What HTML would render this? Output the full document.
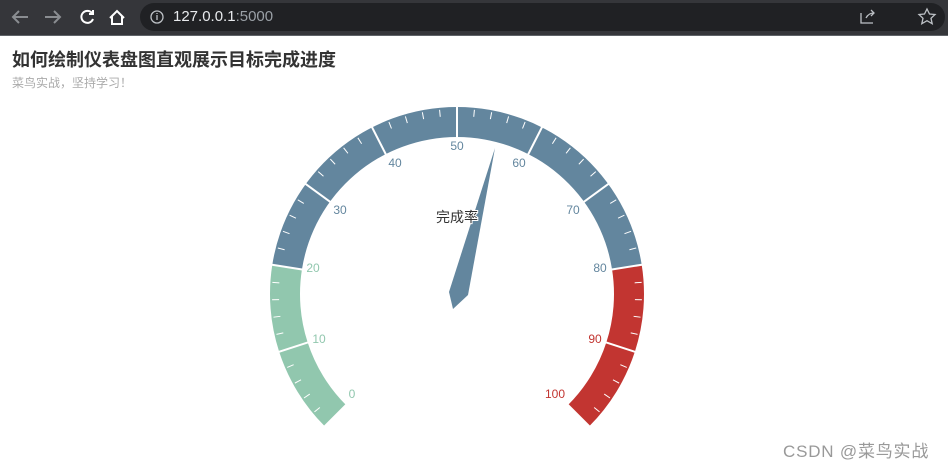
<!DOCTYPE html>
<html><head><meta charset="utf-8"><style>
body{margin:0;width:948px;height:467px;overflow:hidden;background:#fff;font-family:"Liberation Sans","Noto Sans CJK SC",sans-serif;position:relative}
.bar{position:absolute;left:0;top:0;width:948px;height:35px;background:#35363a;border-bottom:1px solid #5f6368}
.pill{position:absolute;left:140px;top:3px;width:805px;height:28px;border-radius:14px;background:#202124}
.url{position:absolute;left:173px;top:8px;font-size:15px;color:#e8eaed}
.url span{color:#9aa0a6}
h1{position:absolute;left:12px;top:46px;margin:0;font-size:18px;font-weight:bold;color:#333}
.sub{position:absolute;left:12px;top:74px;font-size:12px;color:#aaa}
.wm{position:absolute;left:783px;top:437px;font-size:17px;color:#999;letter-spacing:0.8px}
</style></head><body>
<div class="bar"><div class="pill"></div>
<svg width="948" height="35" style="position:absolute;left:0;top:0" fill="none" stroke-width="2">
<path d="M28 17H13M19 11l-6 6 6 6" stroke="#8a8d91"/>
<path d="M45 17h15M54 11l6 6-6 6" stroke="#8a8d91"/>
<path d="M92 13a6 6 0 1 0 1 6M93 10v4h-4" stroke="#fff"/>
<path d="M110 18l7-7 7 7M112 16v8h10v-8" stroke="#fff"/>
<circle cx="157" cy="17" r="6" stroke="#bdc1c6" stroke-width="1.3"/><path d="M157 15v5M157 13v1" stroke="#bdc1c6" stroke-width="1.3"/>
<path d="M861 13v10h12M866 18c2-4 5-5 8-5M871 10l3 3-3 3" stroke="#bdc1c6" stroke-width="1.3"/>
<path d="M927 9l2.5 5 5.5.5-4 3.8 1.2 5.4-5.2-3-5.2 3 1.2-5.4-4-3.8 5.5-.5z" stroke="#bdc1c6" stroke-width="1.3"/>
</svg>
<div class="url">127.0.0.1<span>:5000</span></div></div>
<h1>如何绘制仪表盘图直观展示目标完成进度</h1>
<div class="sub">菜鸟实战，坚持学习！</div>
<svg id="g" width="948" height="467" style="position:absolute;left:0;top:0" font-size="12" text-anchor="middle">
<g id="arcs"></g>
<g fill="#91c7ae"><text x="352" y="398">0</text><text x="319" y="343">10</text><text x="313" y="272">20</text></g>
<g fill="#63869e"><text x="340" y="214">30</text><text x="395" y="167">40</text><text x="457" y="150">50</text><text x="519" y="167">60</text><text x="573" y="214">70</text><text x="600" y="272">80</text></g>
<g fill="#c23531"><text x="595" y="343">90</text><text x="555" y="398">100</text></g>
<polygon points="495,148 468,295 453,309 449,292" fill="#63869e"/>
<text x="457" y="222" font-size="14" fill="#333" stroke="#fff" stroke-width="2" paint-order="stroke">完成率</text>
</svg>
<div class="wm">CSDN @菜鸟实战</div>
<script>
var cx=457,cy=294,R=187,r=157,g=document.getElementById('arcs'),s='';
function ang(v){return (225-v*2.7)*Math.PI/180}
function pt(v,rad){var a=ang(v);return [cx+rad*Math.cos(a),cy-rad*Math.sin(a)]}
function seg(a,b,c){var p1=pt(a,R),p2=pt(b,R),p3=pt(b,r),p4=pt(a,r),l=(b-a)*2.7>180?1:0;
s+='<path fill="'+c+'" d="M'+p1+' A'+R+' '+R+' 0 '+l+' 1 '+p2+' L'+p3+' A'+r+' '+r+' 0 '+l+' 0 '+p4+'Z"/>';}
seg(0,20,'#91c7ae');seg(20,80,'#63869e');seg(80,100,'#c23531');
for(var v=0;v<=100;v+=2){var a=pt(v,v%10?R-2:R+1),b=pt(v,v%10?R-9:r-1);
s+='<line x1="'+a[0]+'" y1="'+a[1]+'" x2="'+b[0]+'" y2="'+b[1]+'" stroke="#fff" stroke-width="'+(v%10?1:2)+'"/>';}
g.innerHTML=s;
</script>
</body></html>
